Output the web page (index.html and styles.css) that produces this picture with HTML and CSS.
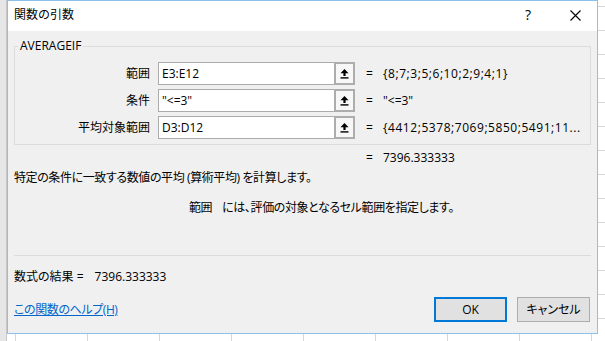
FILE: index.html
```html
<!DOCTYPE html>
<html lang="ja">
<head>
<meta charset="utf-8">
<title>関数の引数</title>
<link rel="stylesheet" href="styles.css">
</head>
<body>
<div class="dialog">
  <div class="titlebar">
    <span class="title">関数の引数</span>
    <div class="tb-buttons">
      <span class="tb-btn help">?</span>
      <span class="tb-btn close"><svg width="11" height="11" viewBox="0 0 11 11"><path d="M0.5 0.5 L10.5 10.5 M10.5 0.5 L0.5 10.5" stroke="#000" stroke-width="1.1" fill="none"/></svg></span>
    </div>
  </div>
  <div class="body">
    <fieldset class="group">
      <legend>AVERAGEIF</legend>
      <div class="args">
        <span class="lbl">範囲</span>
        <div class="field"><span class="input">E3:E12</span><span class="ref"><svg width="9" height="11" viewBox="0 0 9 11"><path d="M4.5 1 L8.5 5.2 L5.6 5.2 L5.6 8 L3.4 8 L3.4 5.2 L0.5 5.2 Z" fill="#000"/><rect x="0.5" y="9.2" width="8" height="1.4" fill="#000"/></svg></span></div>
        <div class="val"><span class="eq">=</span><span class="list">{8;7;3;5;6;10;2;9;4;1}</span></div>

        <span class="lbl">条件</span>
        <div class="field"><span class="input">"&lt;=3"</span><span class="ref"><svg width="9" height="11" viewBox="0 0 9 11"><path d="M4.5 1 L8.5 5.2 L5.6 5.2 L5.6 8 L3.4 8 L3.4 5.2 L0.5 5.2 Z" fill="#000"/><rect x="0.5" y="9.2" width="8" height="1.4" fill="#000"/></svg></span></div>
        <div class="val"><span class="eq">=</span><span>"&lt;=3"</span></div>

        <span class="lbl">平均対象範囲</span>
        <div class="field"><span class="input">D3:D12</span><span class="ref"><svg width="9" height="11" viewBox="0 0 9 11"><path d="M4.5 1 L8.5 5.2 L5.6 5.2 L5.6 8 L3.4 8 L3.4 5.2 L0.5 5.2 Z" fill="#000"/><rect x="0.5" y="9.2" width="8" height="1.4" fill="#000"/></svg></span></div>
        <div class="val"><span class="eq">=</span><span class="list">{4412;5378;7069;5850;5491;11...</span></div>
      </div>
    </fieldset>
    <div class="result-line"><div class="val"><span class="eq">=</span><span>7396.333333</span></div></div>
    <p class="desc">特定の条件に一致する数値の平均 (算術平均) を計算します。</p>
    <p class="arg-desc"><span class="argname">範囲</span>には、評価の対象となるセル範囲を指定します。</p>
    <hr class="sep">
    <div class="formula-result">数式の結果 =<span class="fr-val">7396.333333</span></div>
    <div class="footer">
      <a class="help-link" href="#">この関数のヘルプ(H)</a>
      <div class="buttons">
        <button class="btn ok">OK</button>
        <button class="btn">キャンセル</button>
      </div>
    </div>
  </div>
</div>
</body>
</html>
```
FILE: styles.css
```css
html, body {
  margin: 0;
  padding: 0;
}
body {
  width: 605px;
  height: 341px;
  overflow: hidden;
  font-family: "Open Sans", "Noto Sans CJK JP", sans-serif;
  font-feature-settings: "palt";
  font-size: 12px;
  color: #000;
  background:
    linear-gradient(to right, #e6e6e6 0 6px, #c9c9c9 6px 7px, transparent 7px),
    repeating-linear-gradient(to bottom, transparent 0 6px, #d6d6d6 6px 7px, transparent 7px 24px),
    repeating-linear-gradient(to right, transparent 0 15px, #d6d6d6 15px 16px, transparent 16px 72px),
    #ffffff;
}
.dialog {
  position: absolute;
  left: 7px;
  top: 0;
  width: 591px;
  height: 334px;
  box-sizing: border-box;
  border: 1px solid #8ebfeb;
  background: #f0f0f0;
  display: flex;
  flex-direction: column;
}
.titlebar {
  height: 30px;
  background: #fff;
  display: flex;
  align-items: center;
  justify-content: space-between;
  padding-left: 6px;
}
.title {
  line-height: 16px;
  margin-bottom: 2px;
  font-feature-settings: normal;
}
.tb-buttons {
  display: flex;
  height: 30px;
}
.tb-btn {
  width: 46px;
  height: 30px;
  display: flex;
  align-items: center;
  justify-content: center;
  box-sizing: border-box;
  padding-bottom: 2px;
}
.tb-btn.help {
  font-family: "Open Sans", sans-serif;
  font-size: 14px;
  line-height: 16px;
  padding-right: 4px;
}
.tb-btn.close {
  width: 44px;
}
.body {
  padding: 0 6px;
  flex: 1;
  display: flex;
  flex-direction: column;
}
.group {
  margin: 7px 0 0;
  padding: 8px 0 5px 0;
  border: 1px solid #dcdcdc;
  min-width: 0;
}
.group legend {
  padding: 0 2px;
  margin-left: 3px;
  line-height: 16px;
  font-size: 12px;
}
.args, .result-line {
  display: grid;
  grid-template-columns: 135px 197px 1fr;
  column-gap: 8px;
  row-gap: 4px;
}
.result-line {
  margin: 5px 0 0 1px;
}
.result-line .val {
  grid-column: 3;
  line-height: 16px;
}
.lbl {
  text-align: right;
  line-height: 23px;
  font-feature-settings: normal;
}
.field {
  display: flex;
  height: 23px;
}
.input {
  flex: 1;
  box-sizing: border-box;
  border: 1px solid #ababab;
  border-right: none;
  background: #fff;
  line-height: 21px;
  padding-left: 3px;
}
.ref {
  width: 21px;
  box-sizing: border-box;
  border: 2px solid #adadad;
  background: #f7f7f7;
  display: flex;
  align-items: center;
  justify-content: center;
}
.val {
  display: flex;
  line-height: 23px;
  white-space: nowrap;
}
.list {
  letter-spacing: 0.55px;
}
.eq {
  width: 20px;
  padding-left: 3px;
  box-sizing: border-box;
}
.desc {
  margin: 4px 0 0;
  line-height: 16px;
  letter-spacing: -0.4px;
}
.arg-desc {
  margin: 14px 0 0 175px;
  line-height: 16px;
  letter-spacing: -0.4px;
}
.argname {
  margin-right: 10px;
}
.sep {
  margin: 39px 0 0;
  border: none;
  border-top: 1px solid #dcdcdc;
  height: 0;
}
.formula-result {
  margin-top: 13px;
  line-height: 16px;
}
.fr-val {
  margin-left: 11px;
}
.footer {
  margin-top: 12px;
  display: flex;
  align-items: center;
  justify-content: space-between;
}
.help-link {
  color: #0066cc;
  text-decoration: underline;
  line-height: 16px;
  letter-spacing: -0.4px;
}
.buttons {
  display: flex;
  gap: 10px;
  margin-right: 1px;
}
.btn {
  width: 73px;
  height: 25px;
  box-sizing: border-box;
  background: #e1e1e1;
  border: 1px solid #adadad;
  font-family: "Open Sans", "Noto Sans CJK JP", sans-serif;
  font-feature-settings: "palt";
  font-size: 12px;
  color: #000;
  padding: 0;
  line-height: 21px;
}
.btn.ok {
  border: 2px solid #0078d7;
}
```
